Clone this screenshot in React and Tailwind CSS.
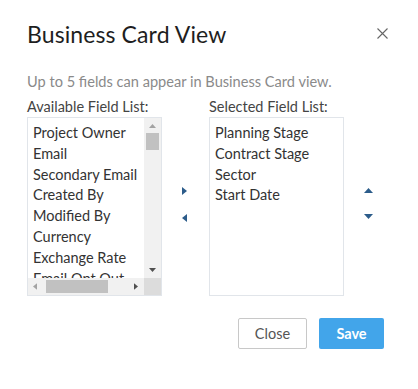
import React from "react";

const available = [
  "Project Owner",
  "Email",
  "Secondary Email",
  "Created By",
  "Modified By",
  "Currency",
  "Exchange Rate",
  "Email Opt Out",
];

const selected = ["Planning Stage", "Contract Stage", "Sector", "Start Date"];

function Tri({ dir, className }) {
  const pts = {
    right: "0,0 5,4 0,8",
    left: "5,0 0,4 5,8",
    up: "0,5 4.5,0 9,5",
    down: "0,0 4.5,5 9,0",
  }[dir];
  const w = dir === "up" || dir === "down" ? 9 : 5;
  const h = dir === "up" || dir === "down" ? 5 : 8;
  return (
    <svg width={w} height={h} viewBox={`0 0 ${w} ${h}`} className={className}>
      <polygon points={pts} />
    </svg>
  );
}

export default function App() {
  return (
    <div
      className="h-[389px] w-[418px] bg-white text-[#333]"
      style={{ fontFamily: "Lato, 'Liberation Sans', sans-serif" }}
    >
      <div className="flex items-start justify-between pl-[27px] pr-[30px] pt-[20px]">
        <h1 className="text-[23px] font-normal leading-[28px] tracking-[0.1px] text-[#1e1e1e]">
          Business Card View
        </h1>
        <button type="button" className="mt-[8px] text-[#666]">
          <svg width="11" height="11" viewBox="0 0 11 11" stroke="currentColor" strokeWidth="1.1">
            <path d="M0.5 0.5L10.5 10.5M10.5 0.5L0.5 10.5" />
          </svg>
        </button>
      </div>

      <p className="mt-[24px] pl-[27px] text-[14.6px] leading-[20px] text-[#8a8a8a]">
        Up to 5 fields can appear in Business Card view.
      </p>

      <div className="mt-[5px] flex pl-[27px]">
        <div className="w-[135px]">
          <div className="text-[14.5px] leading-[20px] text-[#444]">Available Field List:</div>
          <div className="flex h-[179px] flex-col border border-[#e1e5ea]">
            <div className="flex min-h-0 flex-1">
              <ul className="flex-1 overflow-hidden pl-[5px] pt-[5px] text-[14.5px] leading-[20.8px] text-[#333]">
                {available.map((f) => (
                  <li key={f} className="whitespace-nowrap">{f}</li>
                ))}
              </ul>
              <div className="flex w-[17px] flex-col items-center bg-[#f1f1f1]">
                <Tri dir="up" className="mt-[6px] h-[4px] w-[7px] fill-[#a3a3a3]" />
                <div className="mt-[5px] h-[17px] w-[13px] bg-[#c1c1c1]" />
                <div className="flex-1" />
                <Tri dir="down" className="mb-[6px] h-[4px] w-[7px] fill-[#505050]" />
              </div>
            </div>
            <div className="flex h-[17px]">
              <div className="flex flex-1 items-center bg-[#f1f1f1]">
                <Tri dir="left" className="ml-[5px] h-[7px] w-[4px] fill-[#a3a3a3]" />
                <div className="ml-[9px] h-[13px] w-[62px] bg-[#c1c1c1]" />
                <div className="flex-1" />
                <Tri dir="right" className="mr-[6px] h-[7px] w-[4px] fill-[#505050]" />
              </div>
              <div className="w-[17px] bg-[#dcdcdc]" />
            </div>
          </div>
        </div>

        <div className="flex w-[47px] flex-col items-start pl-[20px] pt-[90px]">
          <Tri dir="right" className="fill-[#2c5c8a]" />
          <Tri dir="left" className="mt-[19px] fill-[#2c5c8a]" />
        </div>

        <div className="w-[135px]">
          <div className="text-[14.5px] leading-[20px] text-[#444]">Selected Field List:</div>
          <ul className="h-[179px] border border-[#e1e5ea] pl-[5px] pt-[5px] text-[14.5px] leading-[20.8px] text-[#333]">
            {selected.map((f) => (
              <li key={f}>{f}</li>
            ))}
          </ul>
        </div>

        <div className="flex w-[48px] flex-col items-center pt-[91px]">
          <Tri dir="up" className="fill-[#2c5c8a]" />
          <Tri dir="down" className="mt-[21px] fill-[#2c5c8a]" />
        </div>
      </div>

      <div className="mt-[22px] flex justify-end gap-[12px] pr-[34px]">
        <button
          type="button"
          className="h-[31px] w-[69px] rounded-[2px] border border-[#c8c8c8] bg-white text-[14.5px] text-[#555]"
        >
          Close
        </button>
        <button
          type="button"
          className="h-[31px] w-[65px] rounded-[2px] bg-[#42a5ea] text-[14.5px] font-bold text-white"
        >
          Save
        </button>
      </div>
    </div>
  );
}
